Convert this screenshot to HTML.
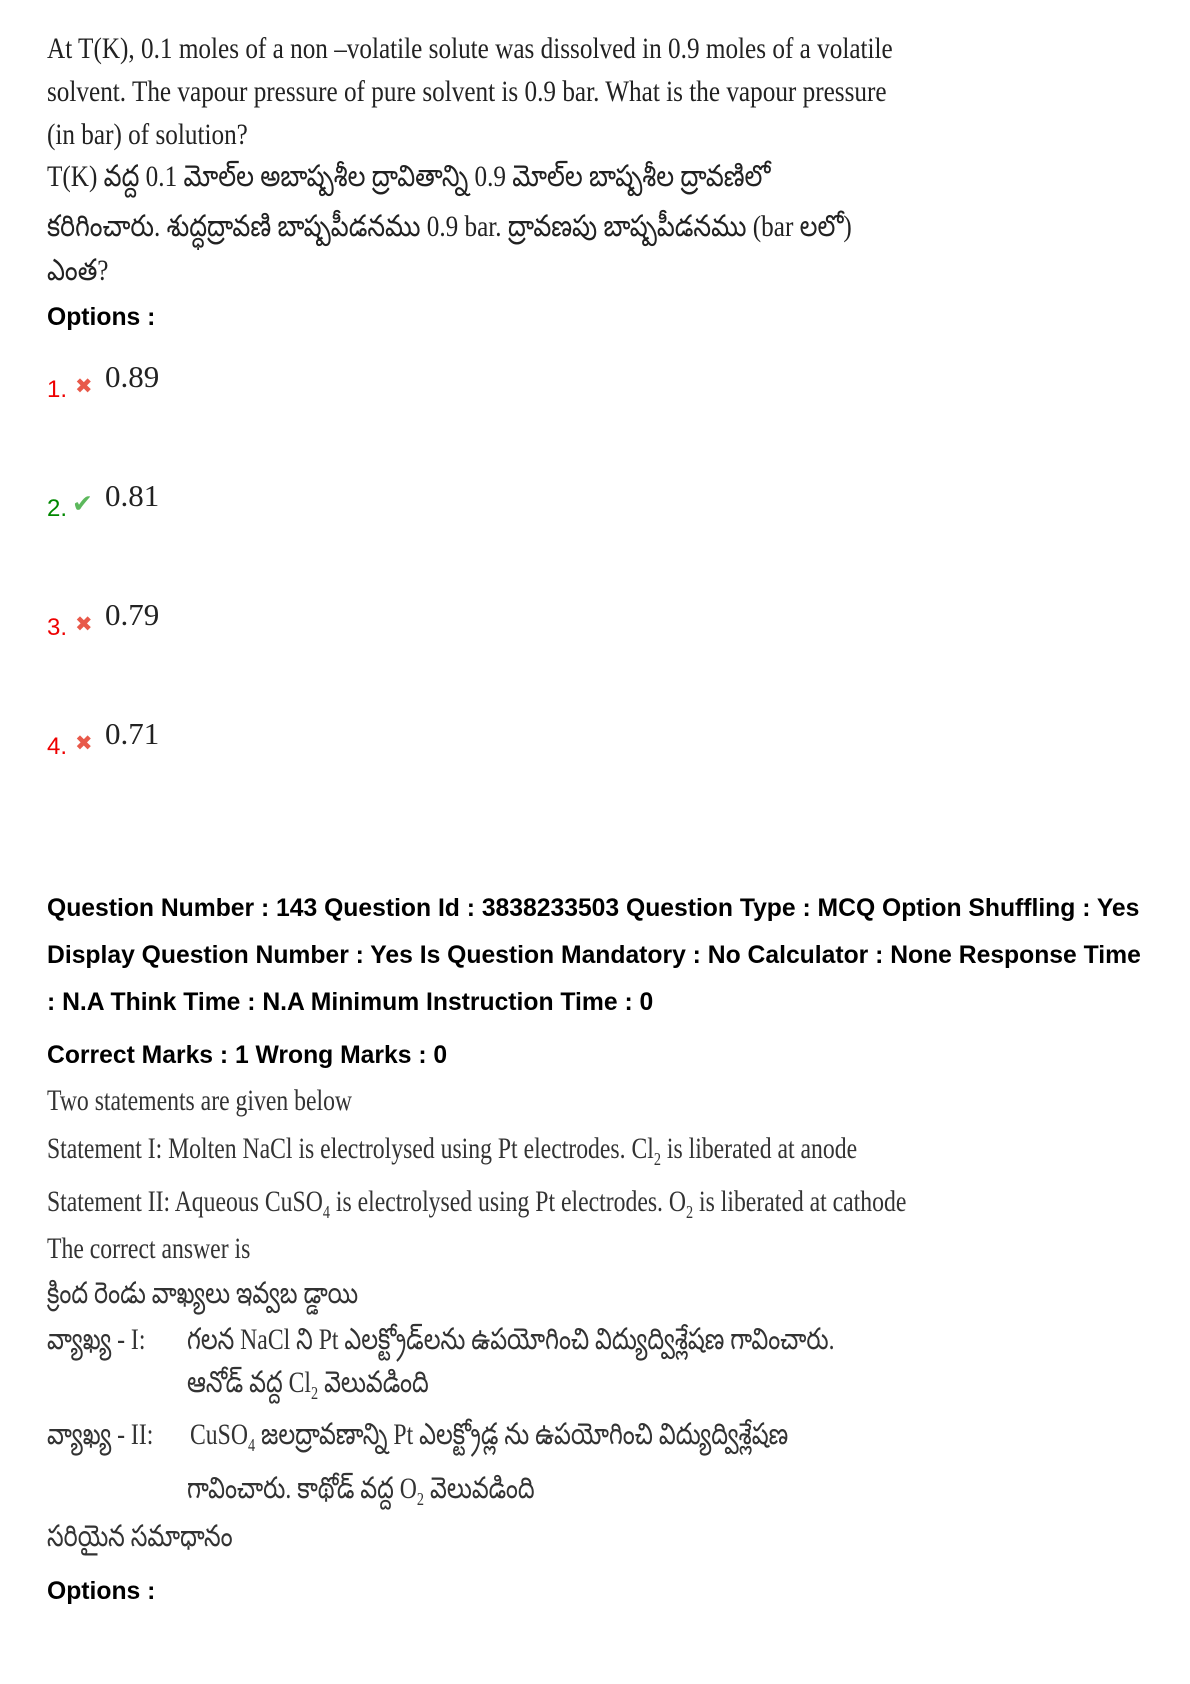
<!DOCTYPE html>
<html><head><meta charset="utf-8"><style>
body{margin:0;width:1190px;height:1684px;background:#fff;position:relative;overflow:hidden}
.l{position:absolute;left:47px;white-space:nowrap;line-height:1}
.s{font-family:"Liberation Serif","Noto Serif CJK SC",serif;font-size:30px;color:#222;transform:scaleX(0.84);transform-origin:left center}
.g{color:#333;transform:scaleX(0.79)}
.b{font-family:"Liberation Sans","DejaVu Sans",sans-serif;font-weight:bold;font-size:24.7px;color:#000}
.n{font-family:"Liberation Sans",sans-serif;font-size:24px}
.v{font-family:"Liberation Serif",serif;font-size:31px;color:#222}
sub{font-size:60%}
</style></head><body>
<div class="l s" style="top:34px">At T(K), 0.1 moles of a non –volatile solute was dissolved in 0.9 moles of a volatile</div>
<div class="l s" style="top:77px">solvent. The vapour pressure of pure solvent is 0.9 bar. What is the vapour pressure</div>
<div class="l s" style="top:120px">(in bar) of solution?</div>
<div class="l s" style="top:162px">T(K) వద్ద 0.1 మోల్‌ల అబాష్పశీల ద్రావితాన్ని 0.9 మోల్‌ల బాష్పశీల ద్రావణిలో</div>
<div class="l s" style="top:212px">కరిగించారు. శుద్ధద్రావణి బాష్పపీడనము 0.9 bar. ద్రావణపు బాష్పపీడనము (bar లలో)</div>
<div class="l s" style="top:256px">ఎంత?</div>
<div class="l b" style="top:306px">Options :</div>

<div class="l n" style="top:378px;color:#e00">1.</div>
<div class="l" style="left:75px;top:376px;color:#e8594a;font-size:21px">✖</div>
<div class="l v" style="left:105px;top:361px">0.89</div>
<div class="l n" style="top:497px;color:#080">2.</div>
<div class="l" style="left:72px;top:492px;color:#5cb85c;font-size:25px">✔</div>
<div class="l v" style="left:105px;top:480px">0.81</div>
<div class="l n" style="top:616px;color:#e00">3.</div>
<div class="l" style="left:75px;top:614px;color:#e8594a;font-size:21px">✖</div>
<div class="l v" style="left:105px;top:599px">0.79</div>
<div class="l n" style="top:735px;color:#e00">4.</div>
<div class="l" style="left:75px;top:733px;color:#e8594a;font-size:21px">✖</div>
<div class="l v" style="left:105px;top:718px">0.71</div>

<div class="l b" style="top:897px">Question Number : 143 Question Id : 3838233503 Question Type : MCQ Option Shuffling : Yes</div>
<div class="l b" style="top:944px">Display Question Number : Yes Is Question Mandatory : No Calculator : None Response Time</div>
<div class="l b" style="top:991px">: N.A Think Time : N.A Minimum Instruction Time : 0</div>
<div class="l b" style="top:1044px">Correct Marks : 1 Wrong Marks : 0</div>

<div class="l s g" style="top:1086px">Two statements are given below</div>
<div class="l s g" style="top:1134px">Statement I: Molten NaCl is electrolysed using Pt electrodes. Cl<sub>2</sub> is liberated at anode</div>
<div class="l s g" style="top:1187px">Statement II: Aqueous CuSO<sub>4</sub> is electrolysed using Pt electrodes. O<sub>2</sub> is liberated at cathode</div>
<div class="l s g" style="top:1234px">The correct answer is</div>
<div class="l s g" style="top:1279px">క్రింద రెండు వాఖ్యలు ఇవ్వబ డ్డాయి</div>
<div class="l s g" style="top:1325px">వ్యాఖ్య - I:</div>
<div class="l s g" style="left:187px;top:1325px">గలన NaCl ని Pt ఎలక్ట్రోడ్‌లను ఉపయోగించి విద్యుద్విశ్లేషణ గావించారు.</div>
<div class="l s g" style="left:187px;top:1368px">ఆనోడ్ వద్ద Cl<sub>2</sub> వెలువడింది</div>
<div class="l s g" style="top:1420px">వ్యాఖ్య - II:</div>
<div class="l s g" style="left:190px;top:1420px">CuSO<sub>4</sub> జలద్రావణాన్ని Pt ఎలక్ట్రోడ్ల ను ఉపయోగించి విద్యుద్విశ్లేషణ</div>
<div class="l s g" style="left:187px;top:1474px">గావించారు. కాథోడ్ వద్ద O<sub>2</sub> వెలువడింది</div>
<div class="l s g" style="top:1522px">సరియైన సమాధానం</div>
<div class="l b" style="top:1580px">Options :</div>
</body></html>
